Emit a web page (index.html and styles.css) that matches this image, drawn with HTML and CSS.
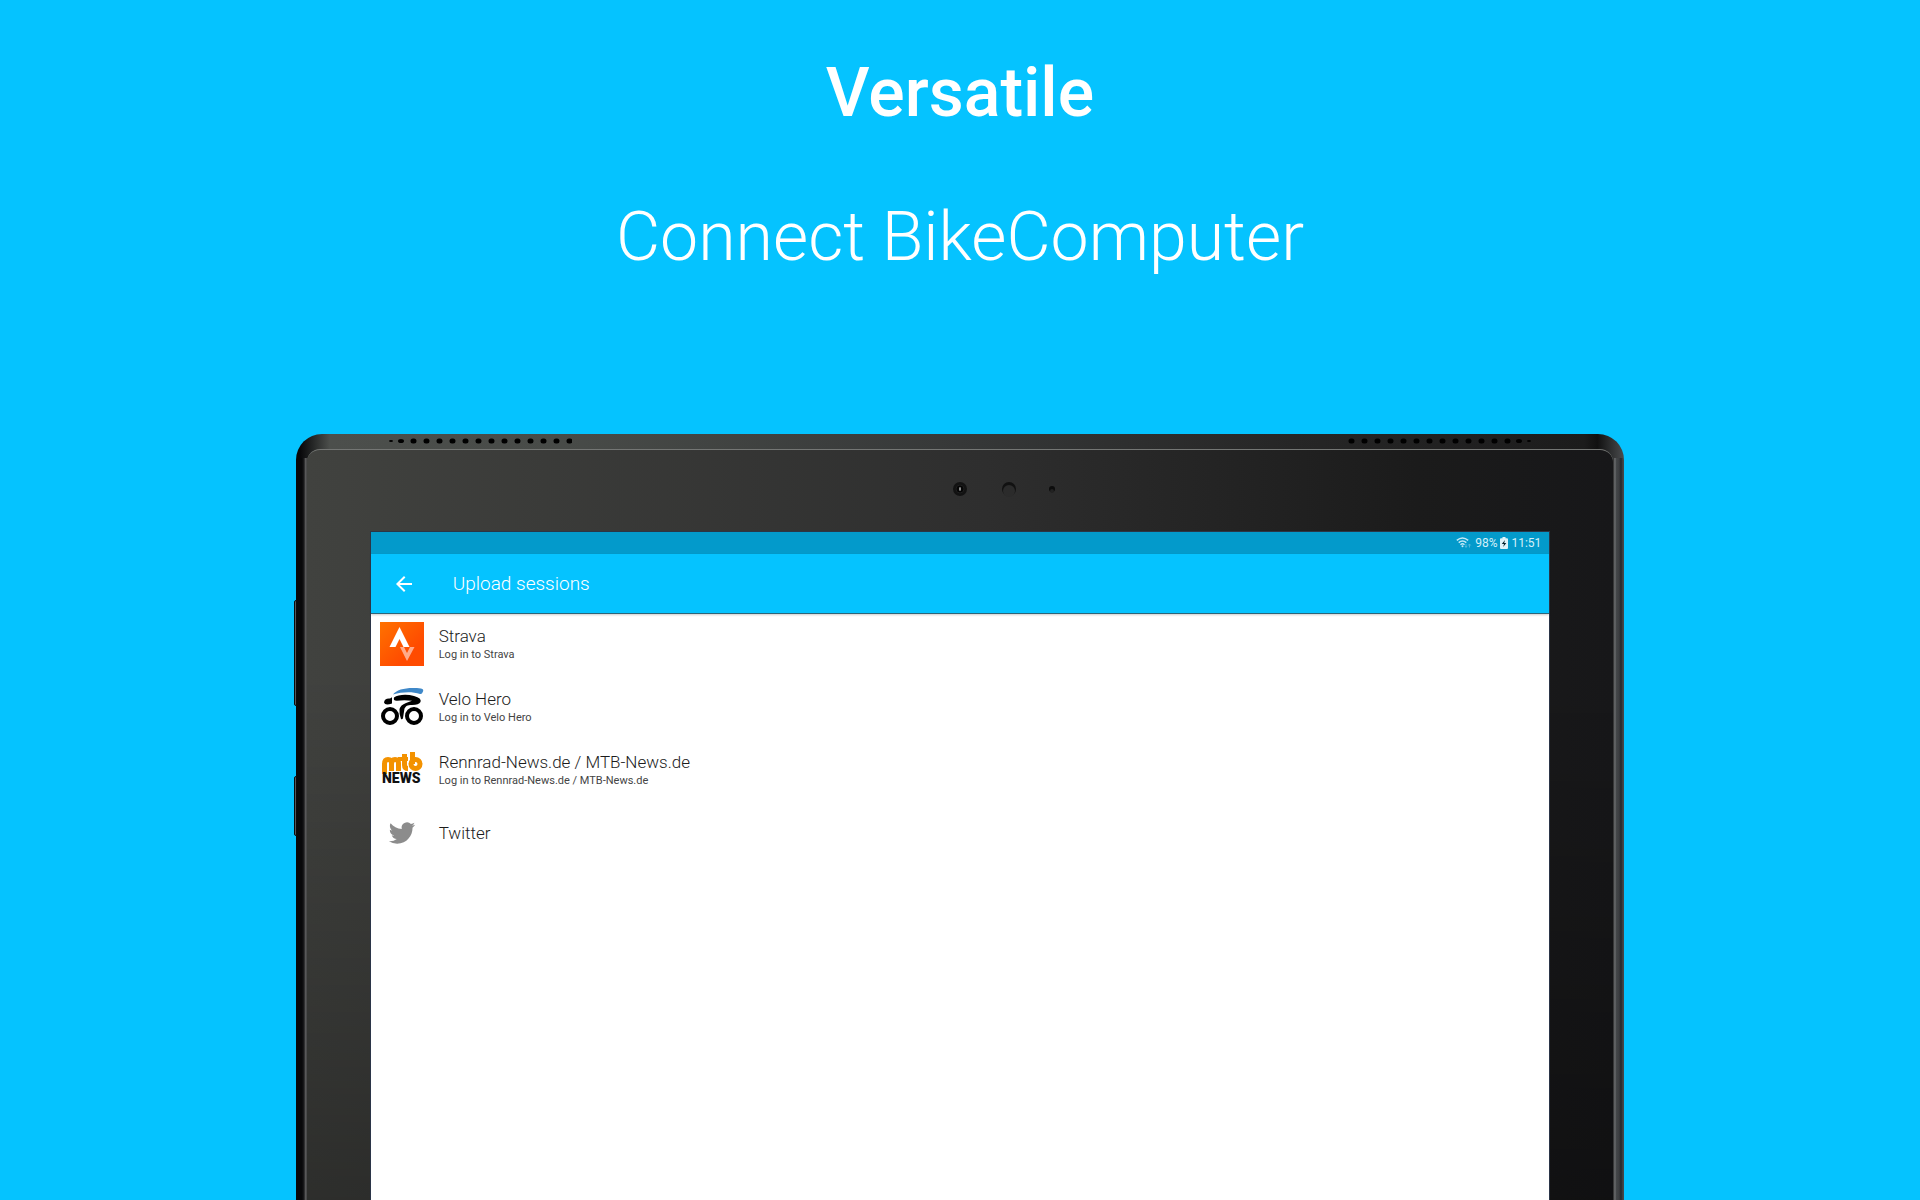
FILE: index.html
```html
<!DOCTYPE html>
<html lang="en">
<head>
    <meta charset="UTF-8">
    <meta name="viewport" content="width=device-width, initial-scale=1.0">
    <title>Versatile - Connect BikeComputer</title>
    <link rel="stylesheet" href="styles.css">
</head>
<body>
    <header class="headline">
        <h1>Versatile</h1>
        <p>Connect BikeComputer</p>
    </header>

    <div class="tablet">
        <span class="side-button power"></span>
        <span class="side-button volume"></span>

        <div class="edge">
            <svg class="speaker" width="184" height="15" viewBox="0 0 184 15" aria-hidden="true">
                <ellipse cx="3" cy="7" rx="2" ry="1"/>
                <ellipse cx="13" cy="7" rx="3" ry="2"/>
                <path d="M25 7h157" stroke="#000" stroke-width="5" stroke-linecap="round" stroke-dasharray="1 12"/>
            </svg>
            <svg class="speaker" width="184" height="15" viewBox="0 0 184 15" aria-hidden="true">
                <path d="M3 7h157" stroke="#000" stroke-width="5" stroke-linecap="round" stroke-dasharray="1 12"/>
                <ellipse cx="171" cy="7" rx="3" ry="2"/>
                <ellipse cx="181" cy="7" rx="2" ry="1"/>
            </svg>
        </div>

        <div class="face">
            <svg class="sensors" width="200" height="80" viewBox="0 0 200 80" aria-hidden="true">
                <circle cx="100" cy="39" r="7" fill="#121212"/>
                <circle cx="100" cy="39" r="4" fill="#050505" stroke="#1d1d1d"/>
                <ellipse cx="100" cy="39" rx="1" ry="2" fill="#999"/>
                <circle cx="149" cy="39" r="7" fill="#111"/>
                <circle cx="149" cy="41" r="6" fill="#2b2b2b"/>
                <circle cx="192" cy="39" r="3" fill="#0c0c0c"/>
                <circle cx="192" cy="41" r="2" fill="#222"/>
            </svg>

            <main class="screen">
                <div class="status-bar">
                    <svg width="16" height="12" viewBox="0 0 16 12" aria-hidden="true">
                        <g fill="none" stroke="#c5e9f6" stroke-width="1.4">
                            <path d="M.8 3.4Q6.500-1.400 12.200 3.400"/>
                            <path d="M2.700 5.600Q6.500 2.300 10.300 5.600"/>
                            <path d="M4.500 7.700Q6.500 6 8.500 7.700"/>
                        </g>
                        <circle cx="6.500" cy="9.200" r="1" fill="#c5e9f6"/>
                        <path d="M10 7v3M9 9l1 1.500 1-1.500M13.500 10.500v-3M12.300 8.500l1.200-1.500 1.200 1.500" fill="none" stroke="#62bcdc" stroke-width=".8"/>
                    </svg>
                    <span>98%</span>
                    <svg width="8" height="12" viewBox="0 0 8 12" aria-hidden="true">
                        <path d="M2.500 0h3v1.300H7q1 0 1 1V11q0 1-1 1H1q-1 0-1-1V2.300q0-1 1-1h1.500z" fill="#dff3fa"/>
                        <path d="M5 3L1.800 7H4l-.8 3L6.300 6H4.200z" fill="#06222d"/>
                    </svg>
                    <span>11:51</span>
                </div>

                <div class="app-bar">
                    <button class="back" type="button" aria-label="Back">
                        <svg width="16" height="16" viewBox="4 4 16 16" aria-hidden="true">
                            <path d="M20 11H7.830l5.590-5.590L12 4l-8 8 8 8 1.410-1.410L7.830 13H20v-2z" fill="#fff"/>
                        </svg>
                    </button>
                    <h2>Upload sessions</h2>
                </div>

                <ul class="services">
                    <li>
                        <a href="#strava">
                            <svg width="44" height="44" viewBox="0 0 44 44" aria-hidden="true">
                                <defs>
                                    <linearGradient id="orange" x1="0" y1="0" x2="1" y2="1">
                                        <stop offset="0" stop-color="#ff7200"/>
                                        <stop offset=".7" stop-color="#ff4b00"/>
                                    </linearGradient>
                                </defs>
                                <path d="M0 0h44v44H0z" fill="url(#orange)"/>
                                <path d="M20 25h4l3 6 3-6h4.500L27 39z" fill="#ffab8b"/>
                                <path d="M19.500 5L29.500 25h-6l-4-8-4 8h-6z" fill="#fff"/>
                            </svg>
                            <span class="label">
                                <span class="name">Strava</span>
                                <span class="hint">Log in to Strava</span>
                            </span>
                        </a>
                    </li>
                    <li>
                        <a href="#velo-hero">
                            <svg width="44" height="44" viewBox="0 0 44 44" aria-hidden="true">
                                <g fill="none" stroke="#000" stroke-width="4">
                                    <circle cx="10" cy="31" r="7"/>
                                    <circle cx="34" cy="31" r="7"/>
                                </g>
                                <path d="M13 9.500C17 4 28 2 41 3.500Q44 4 43 6.500Q42 9.500 40 9C32 6.500 22 7 13 9.500z" fill="#3f88c8"/>
                                <path d="M10 13.500l2-1.300v6.300Q5 21 4 17.500Q4.500 13 10 13.500z"/>
                                <path d="M14 12.500C18 9.500 27 9 34 11Q42 13 40.500 17Q39 20 32 20C27 20 26 21 24.500 23.500L23 33Q22.500 35 21 34Q19 29 19.500 24Q20.500 20 26 18L32 15.800Q24 14.500 17 15.800Q13 16 14 12.500z"/>
                            </svg>
                            <span class="label">
                                <span class="name">Velo Hero</span>
                                <span class="hint">Log in to Velo Hero</span>
                            </span>
                        </a>
                    </li>
                    <li>
                        <a href="#mtb-news">
                            <svg width="44" height="44" viewBox="0 0 44 44" aria-hidden="true">
                                <g fill="none" stroke="#f39200" stroke-width="5">
                                    <path d="M4.500 26V16Q4.500 11.500 8 11.500T11.500 15V23M11.500 16Q11.500 11.500 15 11.500T18.500 15V23"/>
                                    <path d="M24.500 6V17Q24.500 20.500 28 20.500"/>
                                    <path d="M18 11H28" stroke-width="4"/>
                                    <path d="M32.500 4V16"/>
                                    <circle cx="35.500" cy="16" r="4.500"/>
                                </g>
                                <text class="news" x="2" y="35">NEWS</text>
                            </svg>
                            <span class="label">
                                <span class="name">Rennrad-News.de / MTB-News.de</span>
                                <span class="hint">Log in to Rennrad-News.de / MTB-News.de</span>
                            </span>
                        </a>
                    </li>
                    <li>
                        <a href="#twitter">
                            <svg width="44" height="44" viewBox="-8 -8 40 40" aria-hidden="true">
                                <path fill="#8c8c8c" d="M23.953 4.570a10 10 0 01-2.825.775 4.958 4.958 0 002.163-2.723c-.951.555-2.005.959-3.127 1.184a4.920 4.920 0 00-8.384 4.482C7.690 8.095 4.067 6.130 1.640 3.162a4.822 4.822 0 00-.666 2.475c0 1.710.870 3.213 2.188 4.096a4.904 4.904 0 01-2.228-.616v.060a4.923 4.923 0 003.946 4.827 4.996 4.996 0 01-2.212.085 4.936 4.936 0 004.604 3.417 9.867 9.867 0 01-6.102 2.105c-.390 0-.779-.023-1.170-.067a13.995 13.995 0 007.557 2.209c9.053 0 13.998-7.496 13.998-13.985 0-.210 0-.420-.015-.630A9.935 9.935 0 0024 4.590z"/>
                            </svg>
                            <span class="label">
                                <span class="name">Twitter</span>
                            </span>
                        </a>
                    </li>
                </ul>
            </main>
        </div>
    </div>
</body>
</html>
```
FILE: styles.css
```css
* {
    box-sizing: border-box;
}

body {
    margin: 0;
    min-height: 100vh;
    display: flex;
    flex-direction: column;
    align-items: center;
    background-color: #05c3ff;
    color: #fff;
    font-family: Roboto, sans-serif;
}

.headline {
    height: 434px;
    padding-top: 53px;
    text-align: center;
}

.headline h1,
.headline p {
    margin: 0 0 64px;
    font-size: 68px;
    line-height: 80px;
}

.headline h1 {
    font-weight: 500;
}

.headline p {
    font-weight: 300;
}

/* Tablet body */
.tablet {
    position: relative;
    flex: 1;
    width: 69.2%;
    display: flex;
    flex-direction: column;
    padding: 0 11px;
    border-radius: 26px 26px 0 0;
    background:
        linear-gradient(90deg, #08080a 6px, #1c1c1e 8px, #6c6c6c 10px, #2a2a2c 11px, transparent 11px) 0 24px no-repeat,
        linear-gradient(270deg, #444649 1px, #26282b 3px, #3c3e41 5px, #45484a 8px, #737577 9px, #222 11px, transparent 11px) 0 24px no-repeat,
        linear-gradient(90deg, #08080a 4px, #4c4f4c 34px, #484b48 20%, #363838 50%, #262626 75%, #1c1c1c 97%, #111 98%, #4a4c4e);
}

.side-button {
    position: absolute;
    left: -2px;
    width: 3px;
    border-radius: 2px 0 0 2px;
    border: 1px solid #0a0a0c;
    background-color: #55585a;
}

.power {
    top: 166px;
    height: 106px;
}

.volume {
    top: 342px;
    height: 60px;
}

.edge {
    height: 15px;
    padding: 0 81px;
    display: flex;
    justify-content: space-between;
}

.face {
    flex: 1;
    display: flex;
    flex-direction: column;
    padding: 0 64px;
    border-top: 1px solid #747674;
    border-radius: 13px 13px 0 0;
    background:
        linear-gradient(180deg, transparent 30%, rgba(0, 0, 0, 0.3)),
        linear-gradient(90deg, #41423f, #2e2e2e 52%, #1b1b1b 85%, #171719);
}

.sensors {
    align-self: center;
    margin-bottom: 2px;
}

/* App screen */
.screen {
    flex: 1;
    background-color: #fff;
    color: #1c1c1c;
    outline: 1px solid #2b3547;
}

.status-bar {
    height: 22px;
    padding-right: 8px;
    display: flex;
    justify-content: flex-end;
    align-items: center;
    gap: 3px;
    background-color: #039acb;
    color: #d5f0f9;
    font-size: 12px;
}

.app-bar {
    height: 60px;
    padding-left: 24px;
    display: flex;
    align-items: center;
    gap: 40px;
    background-color: #05c3ff;
    border-bottom: 1px solid #2c6579;
    box-shadow: 0 1px 2px rgba(0, 0, 0, 0.2);
    color: #fff;
}

.back {
    display: flex;
    padding: 1px;
    border: none;
    background: none;
    cursor: pointer;
}

.app-bar h2 {
    margin: 0;
    font-size: 19px;
    font-weight: 300;
}

.services {
    margin: 0;
    padding: 0;
    list-style: none;
}

.services a {
    height: 63px;
    padding: 0 9px 3px;
    display: flex;
    align-items: center;
    gap: 15px;
    color: inherit;
    text-decoration: none;
}

.label {
    display: flex;
    flex-direction: column;
}

.name {
    font-size: 17px;
    font-weight: 300;
    line-height: 20px;
}

.hint {
    color: #444;
    font-size: 11px;
    line-height: 17px;
}

.news {
    font-size: 14px;
    font-weight: 900;
    fill: #111;
}
```
